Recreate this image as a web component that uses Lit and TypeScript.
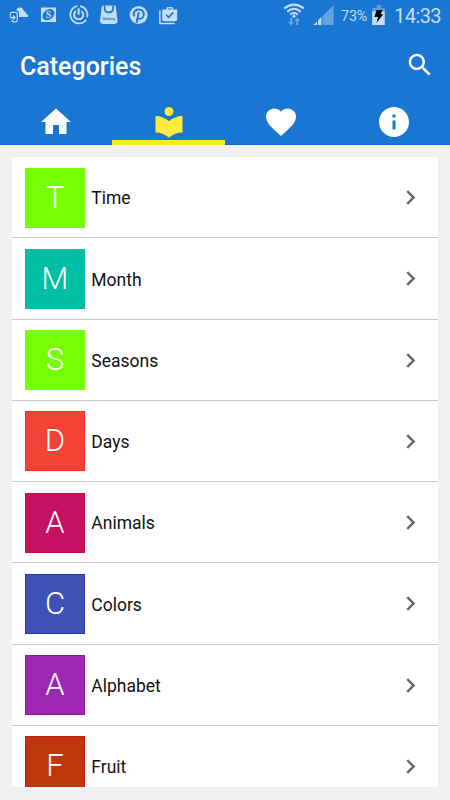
import { LitElement, html, css, svg } from "lit";
import { customElement, property } from "lit/decorators.js";

const categories = [
  { name: "Time", color: "#76ff03", edge: "#76ff03" },
  { name: "Month", color: "#00bfa5", edge: "#00bfa5" },
  { name: "Seasons", color: "#76ff03", edge: "#76ff03" },
  { name: "Days", color: "#f44336", edge: "#f92a20" },
  { name: "Animals", color: "#c51162", edge: "#c20c58" },
  { name: "Colors", color: "#3f51b5", edge: "#2635ae" },
  { name: "Alphabet", color: "#9c27b0", edge: "#9016a8" },
  { name: "Fruit", color: "#bf360c", edge: "#c0200a" },
];

const tabs = [
  { path: "M10 20v-6h4v6h5v-8h3L12 3 2 12h3v8z", active: false },
  {
    path: "M12 11.55C9.64 9.35 6.48 8 3 8v11c3.48 0 6.64 1.35 9 3.55 2.36-2.19 5.52-3.55 9-3.55V8c-3.48 0-6.64 1.35-9 3.55zM12 8c1.66 0 3-1.34 3-3s-1.34-3-3-3-3 1.34-3 3 1.34 3 3 3z",
    active: true,
  },
  {
    path: "M12 21.35l-1.45-1.32C5.4 15.36 2 12.28 2 8.5 2 5.42 4.42 3 7.5 3c1.74 0 3.41.81 4.5 2.09C13.09 3.81 14.76 3 16.5 3 19.58 3 22 5.42 22 8.5c0 3.78-3.4 6.86-8.55 11.54L12 21.35z",
    active: false,
  },
  {
    path: "M12 2C6.48 2 2 6.48 2 12s4.48 10 10 10 10-4.48 10-10S17.52 2 12 2zm1 15h-2v-6h2v6zm0-8h-2V7h2v2z",
    active: false,
  },
];

@customElement("status-bar")
class StatusBar extends LitElement {
  static styles = css`
    :host {
      display: flex;
      height: 32px;
      padding: 0 9px;
      box-sizing: border-box;
      color: #c6ddf5;
      font-family: Roboto, sans-serif;
    }
    .notices {
      display: flex;
      gap: 10px;
    }
    .system {
      display: flex;
      margin-left: auto;
    }
    svg {
      display: block;
      flex: none;
      fill: currentColor;
    }
    .wifi {
      margin-right: 8px;
    }
    .percent {
      width: 31px;
      padding-left: 6px;
      font-size: 14.3px;
      line-height: 32px;
      letter-spacing: -0.1px;
    }
    .time {
      width: 47px;
      padding-left: 8px;
      font-size: 20px;
      line-height: 32px;
      letter-spacing: -0.55px;
      white-space: nowrap;
    }
    .brand {
      font: 700 4.2px Roboto, sans-serif;
      fill: #2b7bd2;
    }
    .s {
      font: 700 10px "Liberation Serif", serif;
      fill: #c6ddf5;
    }
  `;

  render() {
    return html`
      <div class="notices">
        <svg width="20" height="32" viewBox="0 0 20 32">
          <path d="M7.200 10.500C7.800 8.300 9.400 7.300 11 7.500c2 .2 3.400 1.600 3.700 3.500 1.300.2 2 1.100 2.300 2.400 1.500.3 2.300 1.600 2.300 3.700H10v-4.200c0-1.500-.6-2.400-2.800-2.400z" />
          <path d="M4.500 12.400H7q1.200 0 1.200 1.200v7q0 1.200-1.200 1.200H4.300q-1.200 0-1.200-1.200v-1M1.300 17.600H5.500M4 15.500l2.100 2.100L4 19.700M1.300 17.600v-3.500q0-1.700 1.700-1.700h1.500" fill="none" stroke="currentColor" stroke-width="1.200" />
        </svg>
        <svg width="20" height="32" viewBox="0 0 20 32">
          <rect x="2" y="7.500" width="15" height="14.500" />
          <ellipse cx="9.500" cy="14.700" rx="6.600" ry="4.900" transform="rotate(-38 9.500 14.700)" fill="#1976d2" />
          <text class="s" x="9.600" y="18.200" text-anchor="middle">S</text>
        </svg>
        <svg width="20" height="32" viewBox="0 0 20 32">
          <g fill="none" stroke="currentColor">
            <path d="M8.300 6.200A8.700 8.700 0 1 0 17.200 19.700M18.100 17.200A8.700 8.700 0 0 0 11.200 6.200" stroke-width="1.800" />
            <path d="M6.900 11.100A4.600 4.600 0 1 0 12.300 11" stroke-width="2" />
            <path d="M9.600 8.300v6.400" stroke-width="2" />
          </g>
        </svg>
        <svg width="20" height="32" viewBox="0 0 20 32">
          <path d="M2.700 7q.2-1.400 1.600-1.400h11q1.400 0 1.600 1.400l1.600 13.600q.2 3.200-3 3.400H4.100q-3.200-.2-3-3.400z" />
          <path d="M5.600 5.600v2.600c0 5.500 8.400 5.500 8.400 0V5.600" fill="none" stroke="#1976d2" stroke-width="1.700" />
          <text class="brand" x="9.800" y="20" text-anchor="middle">Galaxy</text>
        </svg>
        <svg width="20" height="32" viewBox="0 0 20 32">
          <circle cx="9.600" cy="15" r="9" />
          <path d="M5.600 16.300C3.200 12.500 6 9.500 9.800 9.500c3 0 5 1.900 5 4.500 0 2.800-1.700 4.900-3.900 4.900-1.200 0-2-.6-2.200-1.400M9.800 12.300l-2.300 10.500" fill="none" stroke="#1976d2" stroke-width="1.900" />
        </svg>
        <svg width="20" height="32" viewBox="0 0 20 32">
          <path d="M.9 10.500v13h14.800" fill="none" stroke="currentColor" stroke-width="1.500" />
          <path d="M3.200 9.500h4.400V8.300q0-1.200 1.200-1.200h4q1.200 0 1.200 1.200v1.200h4.200v10q0 1.700-1.700 1.700H4.900q-1.700 0-1.700-1.700zM9 9.500h3.600V8.500H9z" />
          <path d="M7.200 14.900l2.400 2.400 4.700-4.900" fill="none" stroke="#1976d2" stroke-width="1.600" />
        </svg>
      </div>
      <div class="system">
        <svg class="wifi" width="22" height="32" viewBox="0 0 22 32">
          <g fill="none" stroke="currentColor" stroke-width="2">
            <path d="M1.200 8.500Q11 .8 20.800 8.500M4.300 11.600Q11 6.200 17.700 11.600M7.200 14.500Q11 11.600 14.800 14.500" />
          </g>
          <circle cx="11" cy="16.200" r="1.600" />
          <g fill="#6ea8e2">
            <path d="M7.200 18h1.900v4h2L8.100 25.500 5.200 22h2zM13.200 25h1.900v-4h2l-2.900-3.500-3 3.500h2z" />
          </g>
        </svg>
        <svg width="22" height="32" viewBox="0 0 22 32">
          <path d="M20.600 5v20H.8z" fill="#66a4e0" />
          <path d="M.5 25l3.600-3.400V25zM5.200 25v-4.800L8.300 17v8z" />
          <path d="M4.500 20v5M9.200 14v11" stroke="#1976d2" stroke-width=".8" />
        </svg>
        <div class="percent">73%</div>
        <svg width="14" height="32" viewBox="0 0 14 32">
          <path d="M4.600 5h4.600v3h3.600v5H.2V8h4.400z" fill="#5a9edc" />
          <path d="M.2 11.500h12.600V25H.2z" />
          <path d="M4.600 10h6l-2 4.300h2.700L4.400 23l1.700-6H2.400z" fill="#000" />
        </svg>
        <div class="time">14:33</div>
      </div>
    `;
  }
}

@customElement("category-row")
class CategoryRow extends LitElement {
  @property() name = "";
  @property() color = "";
  @property() edge = "";

  static styles = css`
    :host {
      display: flex;
      align-items: center;
      height: 81.25px;
      box-sizing: border-box;
      padding: 1px 12.7px 0 13px;
      border-bottom: 1px solid #c8c8c8;
      background: #fff;
      font-family: Roboto, sans-serif;
    }
    .tile {
      width: 60px;
      height: 60px;
      box-sizing: border-box;
      border: 1px solid;
      flex: none;
      text-align: center;
    }
    .letter {
      display: block;
      color: #fff;
      font-size: 31px;
      font-weight: 300;
      line-height: 58px;
    }
    .name {
      flex: 1;
      padding: 1.5px 0 0 6.300px;
      color: #111;
      font-size: 17.5px;
      line-height: 24px;
    }
    svg {
      display: block;
      fill: #666;
    }
  `;

  render() {
    return html`
      <div class="tile" style="background:${this.color};border-color:${this.edge}">
        <span class="letter">${this.name.charAt(0)}</span>
      </div>
      <div class="name">${this.name}</div>
      <svg width="29" height="29" viewBox="0 0 24 24">
        <path d="M10 6L8.590 7.410 13.170 12l-4.580 4.590L10 18l6-6z" />
      </svg>
    `;
  }
}

@customElement("app-root")
class AppRoot extends LitElement {
  static styles = css`
    :host {
      display: flex;
      flex-direction: column;
      height: 800px;
      box-sizing: border-box;
      overflow: hidden;
      background: #f1f1f1;
      font-family: Roboto, sans-serif;
    }
    header {
      height: 145px;
      flex: none;
      box-sizing: border-box;
      background: #1976d2;
      border-bottom: 1px solid #0c66cf;
      display: flex;
      flex-direction: column;
    }
    .bar {
      display: flex;
      align-items: center;
      justify-content: space-between;
      height: 66px;
      padding: 0 15px 0 20px;
      color: #fff;
    }
    h1 {
      margin: 0;
      padding-top: 4px;
      font-size: 25px;
      line-height: 30px;
      font-weight: 500;
    }
    svg {
      display: block;
      fill: currentColor;
    }
    nav {
      flex: 1;
      display: grid;
      grid-template-columns: 112px 113px 112px 113px;
      margin-bottom: -1px;
    }
    .tab {
      display: flex;
      justify-content: center;
      padding-top: 6px;
      color: #fff;
      border-bottom: 5px solid transparent;
    }
    .tab.active {
      color: #ffeb3b;
      border-bottom-color: #ffeb22;
    }
    main {
      height: 630px;
      margin: 12px 12.5px 0 12px;
      overflow: hidden;
      background: #fff;
    }
  `;

  render() {
    return html`
      <header>
        <status-bar></status-bar>
        <div class="bar">
          <h1>Categories</h1>
          <svg width="30" height="30" viewBox="0 0 24 24">
            <path d="M15.500 14h-.79l-.28-.27C15.410 12.590 16 11.110 16 9.500 16 5.910 13.090 3 9.500 3S3 5.910 3 9.500 5.910 16 9.500 16c1.610 0 3.090-.59 4.230-1.570l.27.28v.79l5 4.990L20.490 19l-4.990-5zm-6 0C7.010 14 5 11.990 5 9.500S7.010 5 9.500 5 14 7.010 14 9.500 11.990 14 9.500 14z" />
          </svg>
        </div>
        <nav>
          ${tabs.map(
            (t) => html`<div class="tab ${t.active ? "active" : ""}">
              <svg width="36" height="36" viewBox="0 0 24 24">${svg`<path d=${t.path} />`}</svg>
            </div>`
          )}
        </nav>
      </header>
      <main>
        ${categories.map(
          (c) => html`<category-row .name=${c.name} .color=${c.color} .edge=${c.edge}></category-row>`
        )}
      </main>
    `;
  }
}
